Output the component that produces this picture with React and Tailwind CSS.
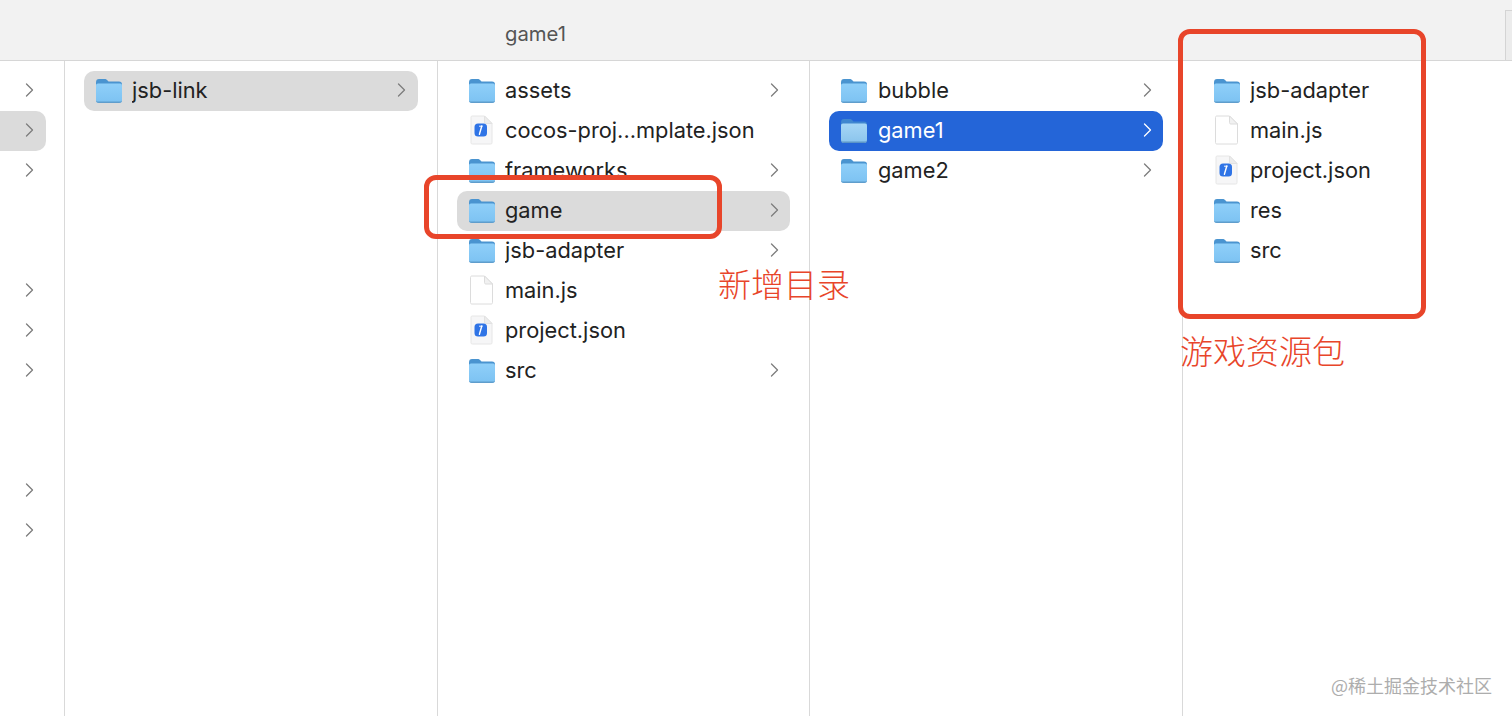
import React from "react";

const sans = "font-['Inter','Noto_Sans',sans-serif]";

function Folder({ selected }) {
  const id = selected ? "fs" : "fn";
  return (
    <svg width="28" height="27" viewBox="0 0 28 27" className="-ml-[0.5px] shrink-0">
      <defs>
        <linearGradient id={id} x1="0" y1="0" x2="0" y2="1">
          <stop offset="0" stopColor={selected ? "#a6d6f6" : "#8fcff9"} />
          <stop offset="1" stopColor={selected ? "#8ac4ec" : "#7cc2f2"} />
        </linearGradient>
      </defs>
      <path d="M1 5.500C1 3 2 2 4 2h5.500c1.300 0 2 .4 2.800 1.200L13.500 4.500H24c2 0 3 1 3 3V10H1z" fill={selected ? "#3f86cf" : "#4a94d0"} />
      <path d="M1 8.500C1 7.200 1.800 6.500 3 6.500h22c1.200 0 2 .7 2 2V23c0 2-1 3-3 3H4c-2 0-3-1-3-3z" fill={`url(#${id})`} />
      <path d="M1 23v.5C1 25 2 26 4 26h20c2 0 3-1 3-2.500V23c0 1-1 1.600-2.500 1.600h-21C2 24.600 1 24 1 23z" fill={selected ? "#5b95c8" : "#5f9dcc"} />
    </svg>
  );
}

function FileIcon() {
  return (
    <svg width="28" height="30" viewBox="0 0 28 30" className="-ml-px shrink-0">
      <path d="M3.500 2.500C3.500 1.500 4 1 5 1h12.500L25.500 9v18.500c0 1-.5 1.500-1.500 1.500H5c-1 0-1.500-.5-1.500-1.500z" fill="#ffffff" stroke="#dcdcdc" />
      <path d="M17.500 1v6.500c0 1 .5 1.500 1.500 1.500h6.500z" fill="#f1f1f1" stroke="#dcdcdc" />
    </svg>
  );
}

function JsonIcon() {
  return (
    <svg width="28" height="30" viewBox="0 0 28 30" className="-ml-px shrink-0">
      <path d="M4 2.500C4 1.500 4.500 1 5.500 1h12L25 8.500v19c0 1-.5 1.500-1.500 1.500h-18C4.500 29 4 28.500 4 27.500z" fill="#f6f6f7" stroke="#e6e6e6" />
      <path d="M17.500 1v6c0 1 .5 1.500 1.500 1.500h6z" fill="#ececec" stroke="#e2e2e2" />
      <rect x="7.500" y="8.500" width="12.500" height="13" rx="3.500" fill="#2f74e6" />
      <path d="M14.800 11 12.400 19.300" stroke="#ffffff" strokeWidth="1.400" strokeLinecap="round" />
      <path d="M12.500 11.200h2.600" stroke="#ffffff" strokeWidth="1" strokeLinecap="round" />
    </svg>
  );
}

function Chevron({ color = "#7d7d7d" }) {
  return (
    <svg width="9" height="14" viewBox="0 0 9 14" className="shrink-0">
      <path d="M1.500 1 7.500 7 1.500 13" fill="none" stroke={color} strokeWidth="1.300" strokeLinecap="round" strokeLinejoin="round" />
    </svg>
  );
}

function Row({ name, kind = "folder", arrow, state, iconBox = "w-[37px]", right = "pr-[11px]" }) {
  const bg = state === "active" ? "bg-[#2465d8] text-white" : state === "muted" ? "bg-[#dbdbdb] text-[#222222]" : "text-[#222222]";
  return (
    <div className={`flex h-10 items-center rounded-[10px] pb-[2px] pl-[11px] ${right} ${bg}`}>
      <div className={`flex shrink-0 items-center ${iconBox}`}>
        {kind === "folder" && <Folder selected={state === "active"} />}
        {kind === "file" && <FileIcon />}
        {kind === "json" && <JsonIcon />}
      </div>
      <span className="flex-1 truncate text-[21.8px] leading-[30px]">{name}</span>
      {arrow && <Chevron color={state === "active" ? "#ffffff" : "#7d7d7d"} />}
    </div>
  );
}

function Column({ className, rows, iconBox, right }) {
  return (
    <div className={`shrink-0 border-r border-[#d9d9d9] pt-[10px] ${className}`}>
      {rows.map((r) => (
        <Row key={r.name} iconBox={iconBox} right={right} {...r} />
      ))}
    </div>
  );
}

const col2 = [{ name: "jsb-link", arrow: true, state: "muted" }];
const col3 = [
  { name: "assets", arrow: true },
  { name: "cocos-proj...mplate.json", kind: "json" },
  { name: "frameworks", arrow: true },
  { name: "game", arrow: true, state: "muted" },
  { name: "jsb-adapter", arrow: true },
  { name: "main.js", kind: "file" },
  { name: "project.json", kind: "json" },
  { name: "src", arrow: true },
];
const col4 = [
  { name: "bubble", arrow: true },
  { name: "game1", arrow: true, state: "active" },
  { name: "game2", arrow: true },
];
const col5 = [
  { name: "jsb-adapter" },
  { name: "main.js", kind: "file" },
  { name: "project.json", kind: "json" },
  { name: "res" },
  { name: "src" },
];
const sidebar = [true, true, true, false, false, true, true, true, false, false, true, true];

export default function App() {
  return (
    <div className={`relative flex h-[716px] w-[1512px] flex-col overflow-hidden bg-white ${sans}`}>
      <header className="flex h-[61px] shrink-0 items-center border-b border-[#d6d6d6] bg-[#f2f2f2] pl-[505px] pt-[9px] text-[20.3px] text-[#555555]">
        game1
      </header>
      <div className="flex flex-1">
        <div className="w-[65px] shrink-0 border-r border-[#d9d9d9] pt-[10px]">
          {sidebar.map((on, i) => (
            <div key={i} className={`flex h-10 items-center justify-end pb-[2px] ${i === 1 ? "mr-[18px] rounded-r-[10px] bg-[#dbdbdb] pr-[12px]" : "pr-[30px]"}`}>
              {on && <Chevron />}
            </div>
          ))}
        </div>
        <Column className="w-[373px] px-[19px]" rows={col2} right="pr-[12px]" />
        <Column className="w-[372px] px-[19px]" rows={col3} />
        <Column className="w-[373px] px-[19px]" rows={col4} iconBox="w-[38px]" />
        <div className="flex-1 pt-[10px] pl-[19px] pr-[130px]">
          {col5.map((r) => (
            <Row key={r.name} {...r} />
          ))}
        </div>
      </div>

      <div className="absolute right-0 top-[10px] h-[50px] w-[7px] border-l border-t border-[#d4d4d4] bg-[#ececec]" />

      <div className="absolute left-[423.500px] top-[175px] h-[64px] w-[298.500px] rounded-[12px] border-[5px] border-[#e8452a]" />
      <div className="absolute left-[1178px] top-[29px] h-[290px] w-[248px] rounded-[12px] border-[5px] border-[#e8452a]" />

      <div className="absolute left-[718px] top-[260px] font-['Noto_Sans_CJK_SC',sans-serif] text-[33px] font-light leading-[46px] text-[#e8452a]">新增目录</div>
      <div className="absolute left-[1180px] top-[327px] font-['Noto_Sans_CJK_SC',sans-serif] text-[33px] font-light leading-[46px] text-[#e8452a]">游戏资源包</div>
      <div className="absolute left-[1331px] top-[672px] font-['Noto_Sans_CJK_SC',sans-serif] text-[18px] leading-[26px] text-[#adadad]">@稀土掘金技术社区</div>
    </div>
  );
}
